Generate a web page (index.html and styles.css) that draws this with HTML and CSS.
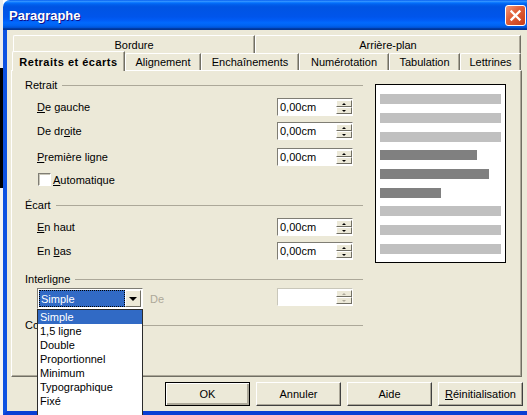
FILE: index.html
```html
<!DOCTYPE html>
<html lang="fr">
<head>
  <meta charset="UTF-8">
  <title>Paragraphe</title>
  <link rel="stylesheet" href="styles.css">
</head>
<body>
  <div class="desk"></div>

  <div class="window">
    <div class="titlebar">
      <span class="title">Paragraphe</span>
      <button class="close" aria-label="Fermer">
        <svg width="19" height="19" viewBox="0 0 19 19">
          <path d="M5.5 5.5l8 8M13.5 5.5l-8 8" stroke="#fff" stroke-width="2.3" stroke-linecap="square" fill="none"/>
        </svg>
      </button>
    </div>

    <div class="frame">
      <div class="tab-row back">
        <div class="tab w-bordure">Bordure</div>
        <div class="tab w-fond">Arrière-plan</div>
      </div>
      <div class="tab-row front">
        <div class="tab active w-retraits">Retraits et écarts</div>
        <div class="tab w-align">Alignement</div>
        <div class="tab w-ench">Enchaînements</div>
        <div class="tab w-num">Numérotation</div>
        <div class="tab w-tabul">Tabulation</div>
        <div class="tab w-lettr">Lettrines</div>
      </div>

      <div class="panel">
        <div class="fields">
          <div class="group">Retrait</div>
          <div class="field">
            <label><u>D</u>e gauche</label>
            <div class="spin"><span class="value">0,00cm</span><span class="arrows"><i class="up"></i><i class="down"></i></span></div>
          </div>
          <div class="field">
            <label>De dr<u>o</u>ite</label>
            <div class="spin"><span class="value">0,00cm</span><span class="arrows"><i class="up"></i><i class="down"></i></span></div>
          </div>
          <div class="field loose">
            <label><u>P</u>remière ligne</label>
            <div class="spin"><span class="value">0,00cm</span><span class="arrows"><i class="up"></i><i class="down"></i></span></div>
          </div>
          <div class="check">
            <span class="box"></span>
            <label><u>A</u>utomatique</label>
          </div>

          <div class="group">Écart</div>
          <div class="field">
            <label><u>E</u>n haut</label>
            <div class="spin"><span class="value">0,00cm</span><span class="arrows"><i class="up"></i><i class="down"></i></span></div>
          </div>
          <div class="field">
            <label>En <u>b</u>as</label>
            <div class="spin"><span class="value">0,00cm</span><span class="arrows"><i class="up"></i><i class="down"></i></span></div>
          </div>

          <div class="group">Interligne</div>
          <div class="line-row">
            <div class="combo">
              <span class="combo-value"><span>Simple</span></span>
              <span class="combo-btn"><i></i></span>
              <ul class="dropdown">
                <li class="selected">Simple</li>
                <li>1,5 ligne</li>
                <li>Double</li>
                <li>Proportionnel</li>
                <li>Minimum</li>
                <li>Typographique</li>
                <li>Fixé</li>
              </ul>
            </div>
            <label class="disabled">De</label>
            <div class="spin off"><span class="value"></span><span class="arrows"><i class="up"></i><i class="down"></i></span></div>
          </div>

          <!-- the open list hides most of this title -->
          <div class="group"><span class="clip">Contrôle du repérage</span></div>
        </div>

        <div class="preview">
          <div class="para">
            <div class="bar"></div>
            <div class="bar"></div>
            <div class="bar"></div>
          </div>
          <div class="para">
            <div class="bar dark l1"></div>
            <div class="bar dark l2"></div>
            <div class="bar dark l3"></div>
          </div>
          <div class="para">
            <div class="bar"></div>
            <div class="bar"></div>
            <div class="bar"></div>
          </div>
        </div>
      </div>

      <div class="actions">
        <button class="btn default">OK</button>
        <button class="btn">Annuler</button>
        <button class="btn">Aide</button>
        <button class="btn"><u>R</u>éinitialisation</button>
      </div>
    </div>
  </div>
</body>
</html>
```

FILE: styles.css
```css
* {
  box-sizing: border-box;
}

body {
  margin: 0;
  width: 527px;
  height: 415px;
  overflow: hidden;
  display: flex;
  background: #fff;
  font-family: "Liberation Sans", Arial, sans-serif;
  font-size: 11px;
  color: #000;
}

u {
  text-decoration: underline;
  text-underline-offset: 1px;
}

/* what is behind the dialog */
.desk {
  flex: none;
  width: 3px;
  background: linear-gradient(#ececec 0, #ececec 68px, #000 68px, #000 188px, #f4f4f4 188px);
}

.window {
  flex: none;
  width: 531px;
  height: 415px;
  display: flex;
  flex-direction: column;
}

.titlebar {
  flex: none;
  height: 30px;
  display: flex;
  align-items: center;
  justify-content: space-between;
  padding: 0 8px 0 6px;
  border-radius: 7px 7px 0 0;
  background: linear-gradient(#0058ee 0%, #3593ff 4%, #288eff 6%, #127dff 8%, #036ffc 10%, #0262ee 14%, #0057e5 20%, #0054e3 24%, #0055eb 56%, #005bf5 66%, #026afe 76%, #0062ef 86%, #0052d6 92%, #0040ab 94%, #003092 100%);
}

.title {
  color: #fff;
  font-size: 13px;
  font-weight: bold;
  text-shadow: 1px 1px #0f1089;
}

.close {
  width: 21px;
  height: 21px;
  padding: 0;
  display: flex;
  align-items: center;
  justify-content: center;
  border: 1px solid #fff;
  border-radius: 3px;
  background: linear-gradient(135deg, #f39a7c 0%, #e2613b 40%, #c83d16 100%);
}

.frame {
  flex: 1;
  background: #ece9d8;
  border-left: 4px solid #0d52e2;
  border-bottom: 4px solid #0a3fd4;
  padding: 5px 11px 0 4px;
}

/* tabs */
.tab-row {
  display: flex;
}

.tab-row.back {
  height: 18px;
  margin-left: 2px;
}

.tab-row.front {
  height: 17px;
  margin-left: 1px;
}

.tab {
  display: flex;
  align-items: center;
  justify-content: center;
  background: #ece9d8;
  border-top: 1px solid #fff;
  border-left: 1px solid #fff;
  border-right: 1px solid #716f64;
  border-top-left-radius: 2px;
  box-shadow: inset -1px 0 #aca899;
  white-space: nowrap;
}

.tab.active {
  position: relative;
  z-index: 1;
  margin: -2px 0 -1px;
  font-weight: bold;
  letter-spacing: 0.5px;
}

.w-bordure { width: 242px; }
.w-fond { width: 266px; }
.w-retraits { width: 113px; }
.w-align { width: 76px; }
.w-ench { width: 98px; }
.w-num { width: 90px; }
.w-tabul { width: 71px; }
.w-lettr { width: 61px; }

.panel {
  width: 511px;
  height: 307px;
  display: flex;
  align-items: flex-start;
  padding: 7px 0 0 13px;
  border: 1px solid;
  border-color: #fff #716f64 #716f64 #fff;
  box-shadow: inset -1px -1px #aca899;
}

.fields {
  width: 338px;
  display: flex;
  flex-direction: column;
}

.group {
  height: 14px;
  display: flex;
  align-items: center;
  gap: 5px;
  margin-top: 12px;
}

.group:first-child {
  margin-top: 0;
}

.group::after {
  content: "";
  flex: 1;
  border-top: 1px solid #aca899;
}

.group .clip {
  width: 12px;
  overflow: hidden;
  white-space: nowrap;
}

.field {
  height: 18px;
  display: flex;
  align-items: center;
  justify-content: space-between;
  margin-top: 6px;
  padding: 0 10px 0 12px;
}

.field.loose {
  margin-top: 8px;
}

/* spin field */
.spin {
  width: 76px;
  height: 18px;
  display: flex;
  background: #fff;
  border: 1px solid;
  border-color: #7f7d74 #fff #fff #7f7d74;
}

.spin .value {
  flex: 1;
  padding-left: 2px;
  line-height: 16px;
}

.arrows {
  width: 16px;
  margin: 1px 0;
  display: flex;
  flex-direction: column;
}

.arrows i {
  flex: 1;
  display: flex;
  align-items: center;
  justify-content: center;
  background: #ece9d8;
  border: 1px solid;
  border-color: #fff #716f64 #716f64 #fff;
}

.arrows i::before {
  content: "";
  border-left: 2px solid transparent;
  border-right: 2px solid transparent;
}

.arrows .up::before {
  border-bottom: 2px solid #000;
}

.arrows .down::before {
  border-top: 2px solid #000;
}

.spin.off {
  margin: 0 10px 0 auto;
  align-self: flex-start;
  border-color: #c9c7ba #fff #fff #c9c7ba;
}

.spin.off .arrows i::before {
  border-bottom-color: #aca899;
  border-top-color: #aca899;
}

/* check box */
.check {
  height: 13px;
  display: flex;
  align-items: center;
  margin-top: 7px;
  padding-left: 13px;
}

.check .box {
  width: 13px;
  height: 13px;
  margin-right: 2px;
  background: #fff;
  border: 1px solid;
  border-color: #7f7d74 #fff #fff #7f7d74;
  box-shadow: inset 1px 1px #c9c7ba;
}

/* line spacing row */
.line-row {
  height: 21px;
  display: flex;
  align-items: center;
  margin-top: 2px;
  padding-left: 12px;
}

.line-row + .group {
  margin-top: 9px;
}

.disabled {
  margin-left: 7px;
  color: #aca899;
}

.combo {
  position: relative;
  width: 106px;
  height: 21px;
  display: flex;
  padding: 1px;
  background: #fff;
  border: 1px solid;
  border-color: #7f7d74 #fff #fff #7f7d74;
}

.combo-value {
  flex: 1;
  display: flex;
  align-items: center;
  background: #316ac5;
  color: #fff;
  border: 1px dotted #000;
  padding-left: 1px;
}

.combo-btn {
  width: 16px;
  display: flex;
  align-items: center;
  justify-content: center;
  background: #ece9d8;
  border: 1px solid;
  border-color: #fff #716f64 #716f64 #fff;
}

.combo-btn i {
  border-left: 4px solid transparent;
  border-right: 4px solid transparent;
  border-top: 4px solid #000;
}

.dropdown {
  position: absolute;
  z-index: 5;
  top: calc(100% + 1px);
  left: -1px;
  width: 106px;
  margin: 0;
  padding: 0 0 8px;
  list-style: none;
  background: #fff;
  border: 1px solid #2b2b2b;
}

.dropdown li {
  height: 14px;
  line-height: 14px;
  padding-left: 2px;
}

.dropdown .selected {
  background: #316ac5;
  color: #fff;
}

/* preview */
.preview {
  width: 131px;
  height: 179px;
  margin: 6px 0 0 12px;
  display: flex;
  flex-direction: column;
  gap: 8px;
  padding: 9px 4px 0;
  background: #fff;
  border: 1px solid #000;
}

.para {
  display: flex;
  flex-direction: column;
  gap: 9px;
}

.bar {
  height: 10px;
  background: #c0c0c0;
}

.bar.dark {
  background: #808080;
}

.bar.l1 { width: 97px; }
.bar.l2 { width: 109px; }
.bar.l3 { width: 61px; }

/* buttons */
.actions {
  display: flex;
  justify-content: flex-end;
  gap: 6px;
  margin-top: 5px;
}

.btn {
  width: 85px;
  height: 24px;
  padding: 0;
  font: inherit;
  color: #000;
  background: #ece9d8;
  border: 1px solid;
  border-color: #fff #404040 #404040 #fff;
  box-shadow: inset -1px -1px #aca899;
}

.btn.default {
  border-color: #000;
  box-shadow: inset 1px 1px #fff, inset -2px -2px #aca899;
}
```
